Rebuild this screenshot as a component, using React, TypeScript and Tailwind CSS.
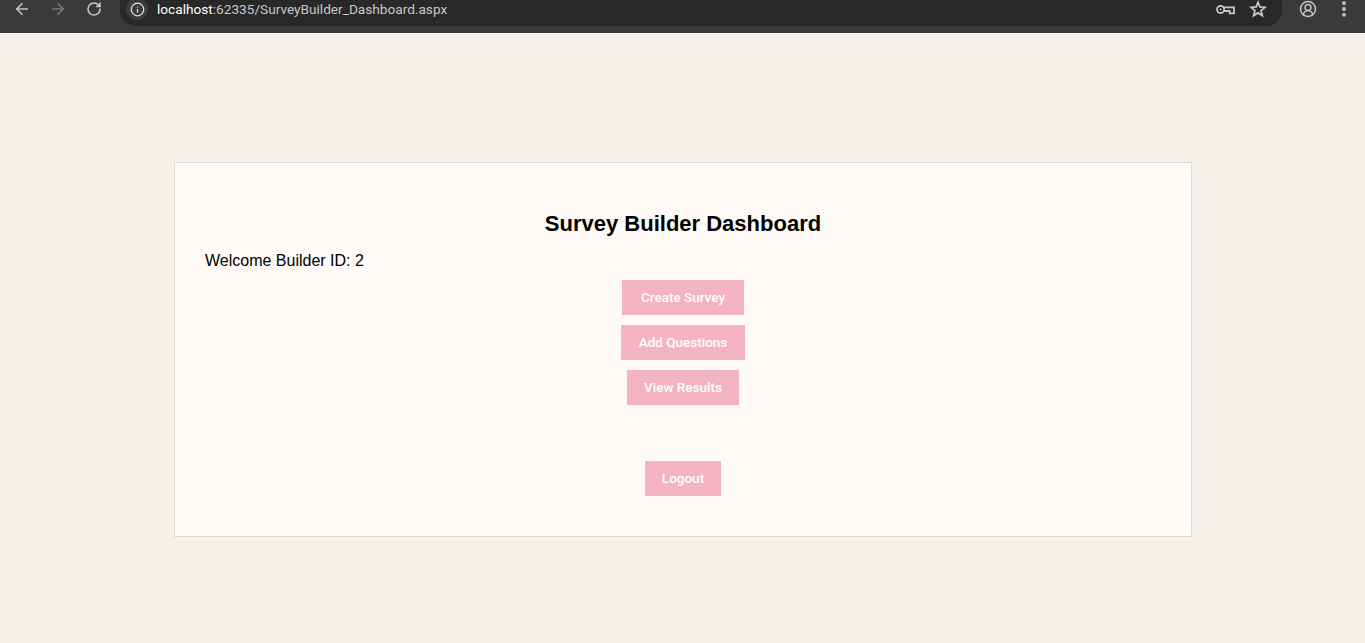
import { ArrowLeft, ArrowRight, RotateCw, Info, CircleUserRound, EllipsisVertical } from "lucide-react";

function KeyIcon() {
  return (
    <svg width="19" height="11" viewBox="0 0 19 11" fill="none" stroke="#c7c7c7" strokeWidth="1.8">
      <circle cx="4.6" cy="5.5" r="3.6" />
      <circle cx="4.6" cy="5.5" r="1" fill="#c7c7c7" stroke="none" />
      <path d="M8 3.4h10v6h-4.4v-2.4H8" />
    </svg>
  );
}

function StarIcon() {
  return (
    <svg width="18" height="18" viewBox="0 0 18 18" fill="none" stroke="#c7c7c7" strokeWidth="1.8" strokeLinejoin="miter">
      <path d="M9 2.4l1.9 4.6 5 .4-3.8 3.2 1.2 4.9L9 12.9l-4.3 2.6 1.2-4.9L2.100 7.400l5-.4z" />
    </svg>
  );
}

function BrowserBar() {
  return (
    <div className="h-[33px] bg-[#3a3a3a] flex items-start text-[#c7c7c7]">
      <div className="w-[120px] h-[18px] flex items-center shrink-0 pl-[13px] gap-[18px]">
        <ArrowLeft size={18} strokeWidth={2.2} />
        <ArrowRight size={18} strokeWidth={2.2} className="text-[#777777]" />
        <RotateCw size={16} strokeWidth={2.4} className="ml-[1px]" />
      </div>
      <div className="flex-1 h-[26px] bg-[#282828] rounded-b-[16px] flex items-start pl-[6px] pr-[15px]">
        <div className="w-[22px] h-[22px] -mt-[2px] rounded-full bg-[#3c3c3c] flex items-center justify-center">
          <Info size={15} strokeWidth={2} className="text-[#e3e3e3]" />
        </div>
        <p className="ml-[9px] -mt-[1px] text-[13.65px] leading-[20px] font-['Roboto',sans-serif] text-[#c7c7c7]">
          <span className="text-white">localhost</span>:62335/SurveyBuilder_Dashboard.aspx
        </p>
        <div className="ml-auto h-[18px] flex items-center gap-[14px]">
          <KeyIcon />
          <StarIcon />
        </div>
      </div>
      <div className="w-[83px] h-[18px] shrink-0 flex items-center pl-[17px] gap-[18px]">
        <CircleUserRound size={18} strokeWidth={1.9} />
        <EllipsisVertical size={20} strokeWidth={2.6} className="-ml-[1px]" />
      </div>
    </div>
  );
}

function DashButton({ label, width }: { label: string; width: string }) {
  return (
    <button className={`h-[35px] ${width} bg-[#f4b3c2] text-white text-[13.5px] font-medium font-['Roboto',sans-serif]`}>
      {label}
    </button>
  );
}

export default function App() {
  return (
    <div className="h-[643px] overflow-hidden bg-[#f5f0e9] font-['Liberation_Sans',Arial,sans-serif] text-black">
      <BrowserBar />
      <div className="w-[1018px] h-[375px] ml-[174px] mt-[129px] bg-[#fffaf5] border border-[#e0d8c8] px-[30px] pt-[46px]">
        <h1 className="text-[22px] leading-[30px] font-bold text-center">Survey Builder Dashboard</h1>
        <p className="mt-[11px] text-[16px] leading-[22px]">Welcome Builder ID: 2</p>
        <div className="mt-[8px] flex flex-col items-center gap-[10px]">
          <DashButton label="Create Survey" width="w-[122px]" />
          <DashButton label="Add Questions" width="w-[124px]" />
          <DashButton label="View Results" width="w-[112px]" />
          <div className="mt-[46px]">
            <DashButton label="Logout" width="w-[76px]" />
          </div>
        </div>
      </div>
    </div>
  );
}
